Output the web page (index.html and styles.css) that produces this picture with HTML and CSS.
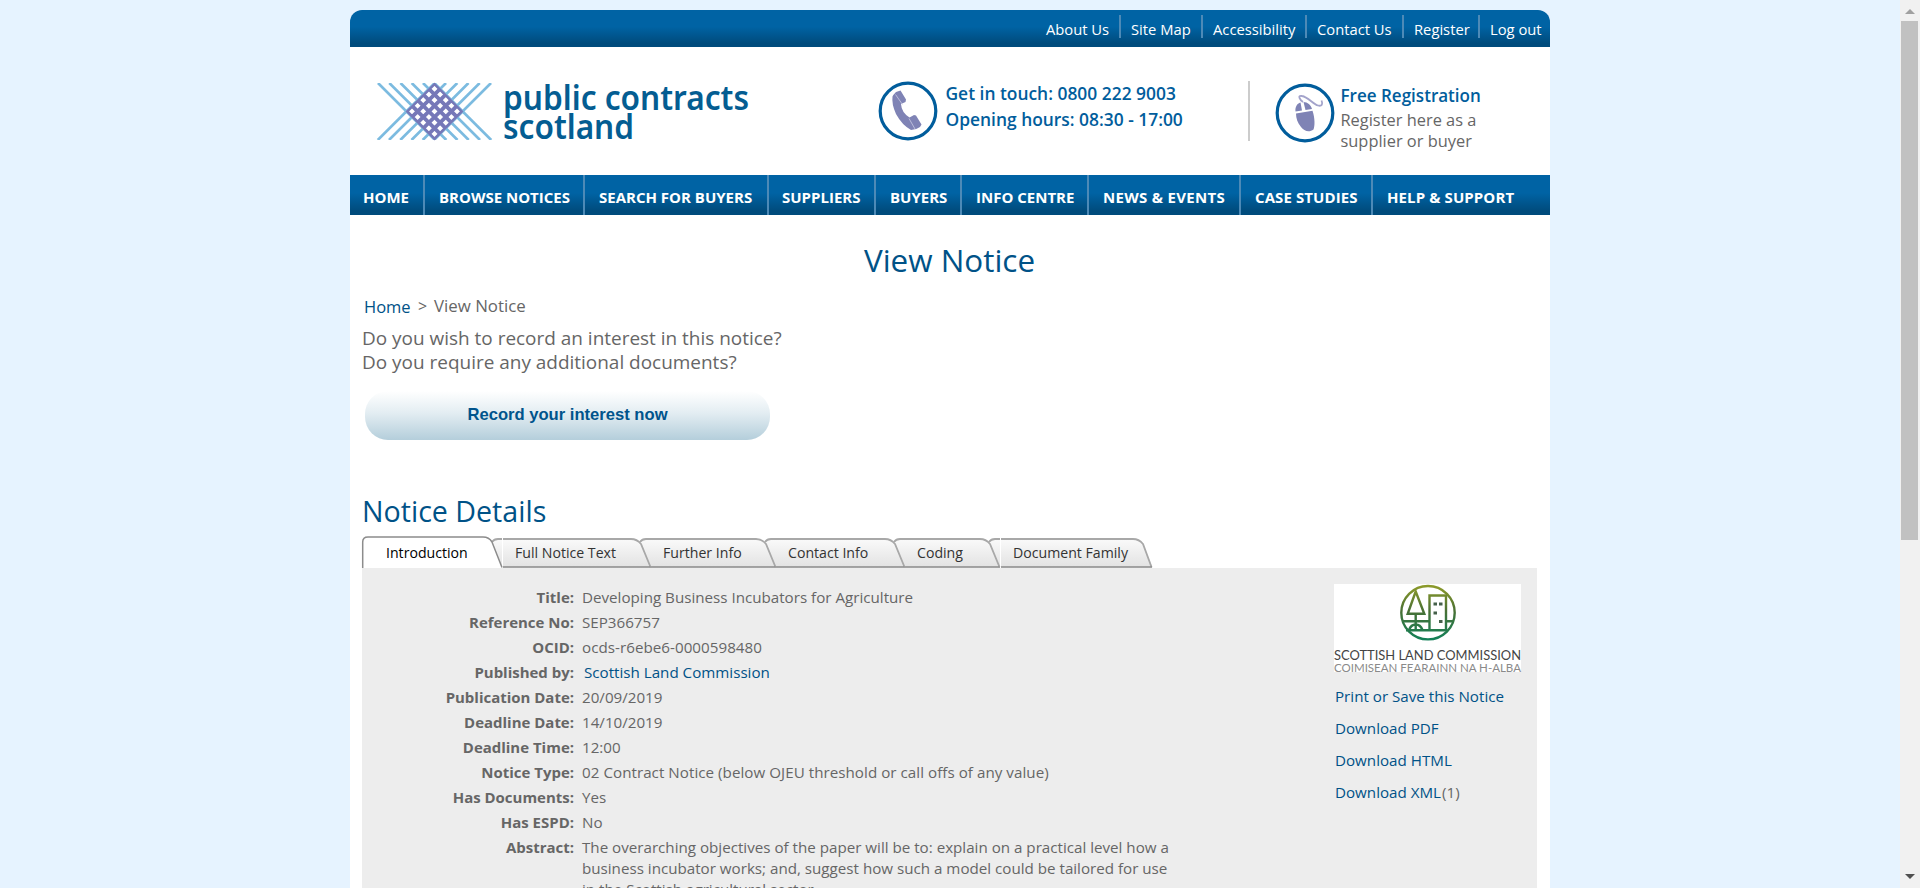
FILE: index.html
```html
<!DOCTYPE html>
<html lang="en">
<head>
<meta charset="utf-8">
<title>View Notice - Public Contracts Scotland</title>
<link rel="stylesheet" href="styles.css">
</head>
<body>
<div class="viewport">
<div class="page">
  <ul class="topbar">
    <li class="t-about">About Us</li><li class="t-map">Site Map</li><li class="t-access">Accessibility</li><li class="t-contact">Contact Us</li><li class="t-register">Register</li><li class="t-logout">Log out</li>
  </ul>
  <header class="header">
    <svg class="logo" width="400" height="80" viewBox="0 0 400 80">
      <defs>
        <clipPath id="diamond"><path d="M69.500 10.500 98.500 39.500 69.500 68.500 40.500 39.500Z"/></clipPath>
        <clipPath id="band"><path d="M10 11H130V68H10Z"/></clipPath>
        <path id="weave" d="M13 11l57 57M24.300 11l57 57M35.500 11l57 57M46.700 11l57 57M58 11l57 57M69.200 11l57 57M126 11l-57 57M114.700 11l-57 57M103.500 11l-57 57M92.300 11l-57 57M81 11l-57 57M69.800 11l-57 57" fill="none"/>
      </defs>
      <g clip-path="url(#band)"><use href="#weave" stroke="#7cbbe0" stroke-width="2.700"/></g>
      <g clip-path="url(#diamond)"><use href="#weave" stroke="#7678b8" stroke-width="3.800"/></g>
      <text x="138" y="38" class="logo-text" textLength="246" lengthAdjust="spacingAndGlyphs">public contracts</text>
      <text x="138" y="67" class="logo-text" textLength="131" lengthAdjust="spacingAndGlyphs">scotland</text>
    </svg>
    <div class="touch">
      <svg width="60" height="60" viewBox="0 0 60 60"><circle cx="30" cy="30" r="27.800" fill="#fff" stroke="#015d9c" stroke-width="3.200"/><path d="M14.500 15.500Q15 14 18 11L22.500 9.500 28 18.500 27.500 21 23 23Q23.500 31.500 31.500 36.500L36 34 38 34.500 43.500 43.500 42 46Q38 49 33 49 24 44 18 33 13.500 23 14.500 15.500Z" fill="#7f83b5"/><path d="M17.500 13.500 24.500 23.500M31 37.500 37 48" stroke="#c9cae3" stroke-width=".8"/></svg>
      <div><p>Get in touch: 0800 222 9003</p><p>Opening hours: 08:30 - 17:00</p></div>
    </div>
    <div class="reg">
      <svg width="60" height="60" viewBox="0 0 60 60"><circle cx="30" cy="30" r="27.800" fill="#fff" stroke="#015d9c" stroke-width="3.200"/><path d="M20.500 28.500C20 24 22 20.500 25.500 19.500L27 27.500ZM28.500 19C32.500 19 36 22 37 26L30.500 27Z" fill="#7f83b5"/><path d="M21 30.500 37.500 27.800C40 35 40 43 38.500 46.500 34 50 29 48 26 44 22.500 40 21 35 21 30.500Z" fill="#7f83b5"/><path d="M28 19C25 17 22 12 27 13 33 14 38 21 43 22.500 47 23.500 48 21 46.500 17.500" fill="none" stroke="#a3a3cb" stroke-width="1.800"/></svg>
      <div><p class="reg-title">Free Registration</p><p>Register here as a</p><p>supplier or buyer</p></div>
    </div>
  </header>
  <nav class="nav">
    <span class="n-home">HOME</span><span class="n-browse">BROWSE NOTICES</span><span class="n-search">SEARCH FOR BUYERS</span><span class="n-suppliers">SUPPLIERS</span><span class="n-buyers">BUYERS</span><span class="n-info">INFO CENTRE</span><span class="n-news">NEWS &amp; EVENTS</span><span class="n-cases">CASE STUDIES</span><span class="n-help">HELP &amp; SUPPORT</span>
  </nav>
  <main class="main">
    <h1>View Notice</h1>
    <div class="crumbs"><a>Home</a><i>&gt;</i><span>View Notice</span></div>
    <div class="ask"><p>Do you wish to record an interest in this notice?</p><p>Do you require any additional documents?</p></div>
    <button class="record">Record your interest now</button>
    <h2>Notice Details</h2>
    <div class="tabs">
      <div class="tab active w-intro"><svg width="140" height="32"><path d="M1 32V7Q1 1 6 1H121Q127 1 130 6L140 32Z" fill="#fff"/><path d="M.7 32V6Q.7 1 6 1H121Q127 1 130 6L140 31.500" fill="none" stroke="#8c8c8c" stroke-width="1.500"/></svg><span>Introduction</span></div>
      <div class="tab w-full"><svg width="148" height="32">
        <defs><linearGradient id="tabfill" x1="0" y1="0" x2="0" y2="1"><stop offset="0" stop-color="#fafafa"/><stop offset="1" stop-color="#e2e2e2"/></linearGradient></defs>
        <path class="tab-fill" d="M0 31.500-10 6Q-8 3-4 3H129Q135 3 139 8L148.500 31.500Z"/><path class="tab-edge" d="M-10 6Q-8 3-4 3H129Q135 3 139 8L148.500 31"/><path class="tab-base" d="M0 31H148.500"/><path d="M.5 2V32" stroke="#fff"/></svg><span>Full Notice Text</span></div>
      <div class="tab w-further"><svg width="125" height="32"><path class="tab-fill" d="M0 31.500-10 6Q-8 3-4 3H106Q112 3 116 8L125.500 31.500Z"/><path class="tab-edge" d="M-10 6Q-8 3-4 3H106Q112 3 116 8L125.500 31"/><path class="tab-base" d="M0 31H125.500"/></svg><span>Further Info</span></div>
      <div class="tab w-contact"><svg width="129" height="32"><path class="tab-fill" d="M0 31.500-10 6Q-8 3-4 3H110Q116 3 120 8L129.500 31.500Z"/><path class="tab-edge" d="M-10 6Q-8 3-4 3H110Q116 3 120 8L129.500 31"/><path class="tab-base" d="M0 31H129.500"/></svg><span>Contact Info</span></div>
      <div class="tab w-coding"><svg width="95" height="32"><path class="tab-fill" d="M0 31.500-10 6Q-8 3-4 3H76Q82 3 86 8L95.500 31.500Z"/><path class="tab-edge" d="M-10 6Q-8 3-4 3H76Q82 3 86 8L95.500 31"/><path class="tab-base" d="M0 31H95.500"/></svg><span>Coding</span></div>
      <div class="tab w-family"><svg width="153" height="32"><path class="tab-fill" d="M0 31.500-10 6Q-8 3-4 3H134Q140 3 144 8L153.500 31.500Z"/><path class="tab-edge" d="M-10 6Q-8 3-4 3H134Q140 3 144 8L152.500 31"/><path class="tab-base" d="M0 31H153"/><path d="M1.500 2V32" stroke="#fff"/></svg><span>Document Family</span></div>
    </div>
    <section class="panel">
      <dl class="details">
        <dt>Title:</dt><dd>Developing Business Incubators for Agriculture</dd>
        <dt>Reference No:</dt><dd>SEP366757</dd>
        <dt>OCID:</dt><dd class="wide">ocds-r6ebe6-0000598480</dd>
        <dt>Published by:</dt><dd class="link">Scottish Land Commission</dd>
        <dt>Publication Date:</dt><dd>20/09/2019</dd>
        <dt>Deadline Date:</dt><dd>14/10/2019</dd>
        <dt>Deadline Time:</dt><dd>12:00</dd>
        <dt>Notice Type:</dt><dd class="wide">02 Contract Notice (below OJEU threshold or call offs of any value)</dd>
        <dt>Has Documents:</dt><dd>Yes</dd>
        <dt>Has ESPD:</dt><dd>No</dd>
        <dt>Abstract:</dt><dd>The overarching objectives of the paper will be to: explain on a practical level how a<br>business incubator works; and, suggest how such a model could be tailored for use<br>in the Scottish agricultural sector.</dd>
      </dl>
      <aside class="side">
        <svg width="188" height="88" viewBox="0 0 188 88">
          <defs><linearGradient id="leaf" gradientUnits="userSpaceOnUse" x1="0" y1="2" x2="0" y2="56"><stop offset="0" stop-color="#8c9a2a"/><stop offset=".45" stop-color="#4a7034"/><stop offset="1" stop-color="#128058"/></linearGradient></defs>
          <rect width="187" height="88" fill="#fff"/>
          <g fill="none" stroke="url(#leaf)" stroke-width="2.400">
            <circle cx="94" cy="28.700" r="26.700"/>
            <path d="M81.700 7.500 73.700 29.800H90.300ZM81.700 30V46M68.500 37.300H95M75 46Q77 40.500 81.700 40.500T88.500 46M72 46.300H113.500M95.500 46V11.500H112V46M112 37.300H119"/>
          </g>
          <path d="M99.500 18.500h3.500v3h-3.500zM105 18.500h3.500v3h-3.500zM99.500 27.500h3.500v3h-3.500zM105 36h3.500v3h-3.500z" fill="#45604a"/>
          <text x="0" y="75.800" class="crest-main" textLength="187" lengthAdjust="spacingAndGlyphs">SCOTTISH LAND COMMISSION</text>
          <text x="0" y="88" class="crest-sub" textLength="187" lengthAdjust="spacingAndGlyphs">COIMISEAN FEARAINN NA H-ALBA</text>
        </svg>
        <ul><li>Print or Save this Notice</li><li>Download PDF</li><li>Download HTML</li><li class="xml">Download XML<span>(1)</span></li></ul>
      </aside>
    </section>
  </main>
</div>
</div>
<div class="scroll">
  <svg width="20" height="21"><path d="M10 9 15 14H5Z" fill="#a0a0a0"/></svg>
  <div class="thumb"></div>
  <svg class="down" width="20" height="21"><path d="M5 7H15L10 12Z" fill="#505050"/></svg>
</div>
</body>
</html>
```
FILE: styles.css
```css
*{box-sizing:border-box;margin:0;padding:0}
body{display:flex;background:#e6f3ff;font-family:"Open Sans","Noto Sans",sans-serif;font-size:15.17px;line-height:21px;color:#666;height:888px;overflow:hidden;white-space:nowrap}
ul{list-style:none}
svg{display:block;flex:none}
.viewport{width:1900px;height:888px;overflow:hidden}
.page{width:1200px;margin:10px auto 0;background:#fff;border-radius:12px 12px 0 0}

.topbar{height:37px;display:flex;justify-content:flex-end;padding-top:5px;border-radius:12px 12px 0 0;background:linear-gradient(#0063a4 0,#0063a4 45%,#004b7c 90%);color:#fff;font-size:14.75px}
.topbar li{height:23px;line-height:28px;border-left:2px solid #4d8ab7;padding-left:10px}
.topbar .t-about{width:85px;border-left:0;padding-left:12px}
.t-map{width:82px}
.t-access{width:104px}
.t-contact{width:97px}
.t-register{width:76px}
.t-logout{width:72px}

.header{display:flex;align-items:flex-start;height:128px;padding:25px 0 0 15px}
.logo-text{font:600 34px "Noto Sans",sans-serif;fill:#045d92}
.touch{display:flex;gap:8px;margin:9px 0 0 112.5px;width:372px;height:60px;border-right:2px solid #ccc;color:#015d9c;font-size:17.4px;font-weight:600;line-height:26px}
.touch div{margin-top:-1px}
.reg{display:flex;gap:6px;margin:11px 0 0 25px;font-size:16.4px}
.reg-title{color:#015d9c;font-size:17.05px;font-weight:600;line-height:26px}

.nav{display:flex;height:40px;background:linear-gradient(#0063a4 0,#0063a4 45%,#004b7c 90%);color:#fff;font-size:15px;font-weight:700;line-height:44px}
.nav span{padding-left:14px;border-right:2px solid #4d8ab7}
.nav .n-home{width:75px;padding-left:13px}
.n-browse{width:160px}
.n-search{width:184px}
.nav .n-suppliers{width:107px;padding-left:13px}
.n-buyers{width:86px}
.n-info{width:127px}
.n-news{width:152px;letter-spacing:.3px}
.n-cases{width:132px;letter-spacing:.1px}
.nav .n-help{border:0;letter-spacing:.1px}

.main{padding:25px 13px 0 12px}
h1{font-weight:400;font-size:31.4px;line-height:39px;height:40px;text-align:center;color:#005287}
.crumbs{display:flex;margin-top:16px;padding-left:2px;line-height:20px;font-size:16.85px}
.crumbs a{width:54px;color:#005287;font-size:16.5px;line-height:22px;height:20px}
.crumbs i{width:16px;font-style:normal;font-size:16px}
.ask{margin-top:10px;font-size:18.97px;line-height:24px}
.record{display:block;width:405px;height:49px;margin:17px 0 0 3px;border:0;border-radius:23px;background:linear-gradient(#fff,#e3edf2 45%,#b4cedb);color:#00548c;font:bold 16.6px "Liberation Sans",Arial,sans-serif;padding-bottom:2px}
h2{margin-top:53px;font-weight:400;font-size:28.6px;line-height:36px;color:#005287}

.tabs{display:flex;height:32px;margin-top:7px;color:#333;font-size:14.13px}
.tab{position:relative;padding:6px 0 0 13px}
.tab svg{position:absolute;left:0;top:0;overflow:visible}
.tab span{position:relative}
.active{color:#000}
.tab.active{padding-left:24px}
.w-intro{width:140px;z-index:6}
.w-full{width:148px;z-index:5}
.w-further{width:125px;z-index:4}
.w-contact{width:129px;z-index:3}
.w-coding{width:95px;z-index:2}
.w-family{width:153px;z-index:1}
.tab.w-family{padding-left:14px}
.tab-fill{fill:url(#tabfill)}
.tab-edge{fill:none;stroke:#a8a8a8;stroke-width:1.8}
.tab-base{stroke:#8a8a8a;stroke-width:1.6}

.panel{display:flex;justify-content:space-between;height:340px;background:#ededed}
.details{display:grid;grid-template-columns:212px max-content;column-gap:8px;row-gap:4px;align-content:start;padding-top:19px}
dt{text-align:right;font-weight:700;font-size:14.97px}
.wide{letter-spacing:.04px}
.link{color:#005287;padding-left:2px}
.side{width:203px;padding-top:16px}
.crest-main{font:400 13.5px Lato,sans-serif;fill:#444}
.crest-sub{font:400 11.8px Lato,sans-serif;fill:#8a8a8a}
.side ul{margin-top:8px;padding-left:1px;color:#005287;font-size:15.17px;line-height:32.2px}
.side .xml{line-height:31px}
.side li span{color:#666;margin-left:1px}

.scroll{display:flex;flex-direction:column;width:20px;height:888px;background:#f1f1f1}
.thumb{width:17px;height:519px;margin-left:1px;background:#c1c1c1}
.down{margin-top:auto}
```
